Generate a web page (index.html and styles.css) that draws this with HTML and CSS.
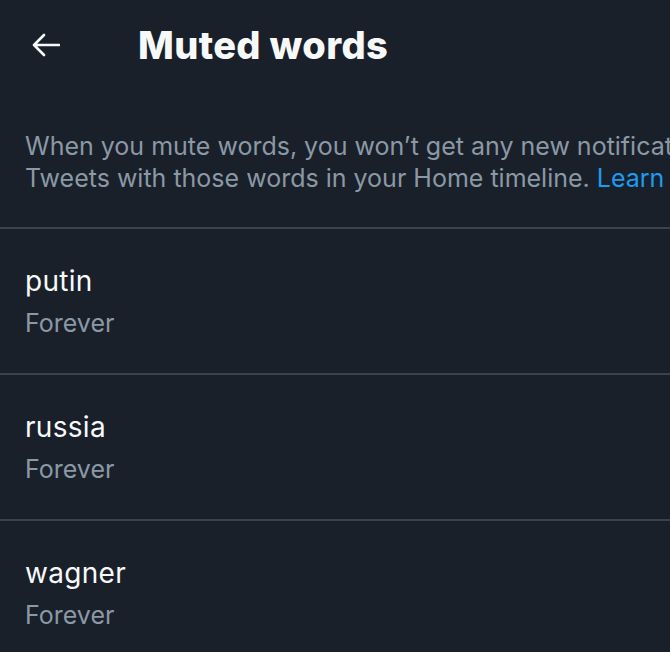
FILE: index.html
```html
<!DOCTYPE html>
<html lang="en">
<head>
<meta charset="utf-8">
<title>Muted words</title>
<link rel="stylesheet" href="styles.css">
</head>
<body>
<div class="page">
  <header class="header">
    <button class="back" aria-label="Back">
      <svg viewBox="0 0 28 24" width="28" height="24" aria-hidden="true">
        <path d="M2 12 H27 M12 2 L2 12 L12 22" fill="none" stroke="#f7f9f9" stroke-width="2.6" stroke-linecap="round" stroke-linejoin="round"/>
      </svg>
    </button>
    <h1 class="title">Muted words</h1>
  </header>
  <p class="desc">When you mute words, you won’t get any new notifications for Tweets that include them or see<br>Tweets with those words in your Home timeline. <a class="link" href="#">Learn more</a></p>
  <ul class="list">
    <li class="item"><span class="word">putin</span><span class="dur">Forever</span></li>
    <li class="item"><span class="word">russia</span><span class="dur">Forever</span></li>
    <li class="item"><span class="word">wagner</span><span class="dur">Forever</span></li>
  </ul>
</div>
</body>
</html>
```

FILE: styles.css
```css
html, body {
  margin: 0;
  padding: 0;
  background: #19202a;
  overflow: hidden;
}
.page {
  width: 670px;
  height: 652px;
  overflow: hidden;
  font-family: Inter, "Liberation Sans", sans-serif;
  color: #f7f9f9;
}
.header {
  height: 90px;
  display: flex;
  align-items: center;
  padding-left: 32px;
}
.back {
  background: none;
  border: 0;
  padding: 0;
  width: 28px;
  height: 24px;
  display: flex;
  margin-right: 78px;
}
.title {
  margin: 0;
  font-size: 38px;
  font-weight: 800;
  letter-spacing: 0.35px;
}
.desc {
  margin: 0;
  padding: 40px 0 0 25px;
  height: 97px;
  font-size: 25px;
  line-height: 32px;
  color: #8b98a5;
  white-space: nowrap;
}
.link {
  color: #1d9bf0;
  text-decoration: none;
}
.list {
  list-style: none;
  margin: 0;
  padding: 0;
}
.item {
  border-top: 2px solid #38434d;
  display: flex;
  flex-direction: column;
  padding: 35px 0 0 25px;
  box-sizing: border-box;
  height: 146px;
}
.word {
  font-size: 28px;
  line-height: 34px;
  letter-spacing: 0.3px;
}
.dur {
  margin-top: 10px;
  font-size: 25px;
  line-height: 30px;
  color: #8b98a5;
}
```
